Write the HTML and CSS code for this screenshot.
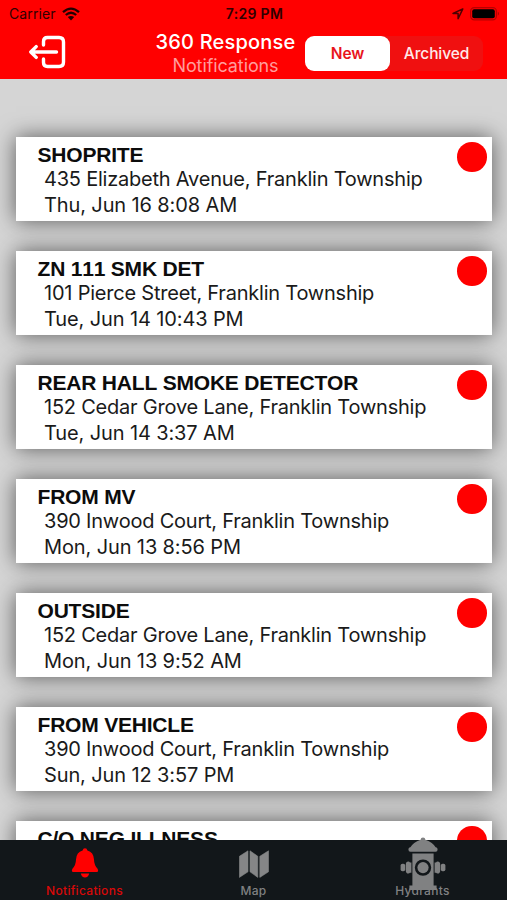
FILE: index.html
```html
<!DOCTYPE html>
<html lang="en">
<head>
  <meta charset="UTF-8" />
  <meta name="viewport" content="width=device-width, initial-scale=1.0"/>
  <title>360 Response</title>
  <link rel="stylesheet" href="styles.css">
</head>
<body>
  <div class="app">
    <header class="header">
      <div class="status-bar">
        <div class="status-left">
          <span class="carrier">Carrier</span>
          <svg class="wifi" width="18" height="14" viewBox="0 0 18 14">
            <path d="M1 5.2 Q9 -2 17 5.2 M3.8 8 Q9 3.4 14.2 8" fill="none" stroke="#220000" stroke-width="2.3"/>
            <path d="M9 13.4 L5.8 10.1 Q9 7.7 12.2 10.1 Z" fill="#220000"/>
          </svg>
        </div>
        <span class="time">7:29 PM</span>
        <div class="status-right">
          <svg width="12" height="12" viewBox="0 0 12 12">
            <path d="M10.8 0.9 L1 5.5 H6.1 V10.8 Z" fill="none" stroke="#4c0000" stroke-width="1.5" stroke-linejoin="round"/>
          </svg>
          <svg width="30" height="14" viewBox="0 0 30 14">
            <rect x="0.6" y="0.6" width="25.8" height="12.2" rx="3.6" fill="none" stroke="#b80000" stroke-width="1.2"/>
            <rect x="2.2" y="2.2" width="22.6" height="9" rx="2" fill="#000"/>
            <path d="M27.8 4.6 Q30 6.7 27.8 8.8 Z" fill="#a80000"/>
          </svg>
        </div>
      </div>
      <div class="nav">
        <svg class="logout" width="38" height="36" viewBox="0 0 38 36">
          <path d="M14.5 10 V6.5 Q14.5 2.5 18.5 2.5 H30 Q34.5 2.5 34.5 7 V27 Q34.5 31.5 30 31.5 H18.5 Q14.5 31.5 14.5 27.5 V24" fill="none" stroke="#fff" stroke-width="3.4" stroke-linecap="round"/>
          <path d="M27.5 17 H2 M7.2 11.6 L1.8 17 L7.2 22.4" fill="none" stroke="#fff" stroke-width="3.4" stroke-linecap="round" stroke-linejoin="round"/>
        </svg>
        <div class="titles">
          <div class="title">360 Response</div>
          <div class="subtitle">Notifications</div>
        </div>
        <div class="segmented">
          <div class="segment active">New</div>
          <div class="segment">Archived</div>
        </div>
      </div>
    </header>

    <main class="list">
      <div class="card">
        <div class="card-text">
          <h2>SHOPRITE</h2>
          <p class="address">435 Elizabeth Avenue, Franklin Township</p>
          <p class="date">Thu, Jun 16 8:08 AM</p>
        </div>
        <span class="dot"></span>
      </div>
      <div class="card">
        <div class="card-text">
          <h2>ZN 111 SMK DET</h2>
          <p class="address">101 Pierce Street, Franklin Township</p>
          <p class="date">Tue, Jun 14 10:43 PM</p>
        </div>
        <span class="dot"></span>
      </div>
      <div class="card">
        <div class="card-text">
          <h2>REAR HALL SMOKE DETECTOR</h2>
          <p class="address">152 Cedar Grove Lane, Franklin Township</p>
          <p class="date">Tue, Jun 14 3:37 AM</p>
        </div>
        <span class="dot"></span>
      </div>
      <div class="card">
        <div class="card-text">
          <h2>FROM MV</h2>
          <p class="address">390 Inwood Court, Franklin Township</p>
          <p class="date">Mon, Jun 13 8:56 PM</p>
        </div>
        <span class="dot"></span>
      </div>
      <div class="card">
        <div class="card-text">
          <h2>OUTSIDE</h2>
          <p class="address">152 Cedar Grove Lane, Franklin Township</p>
          <p class="date">Mon, Jun 13 9:52 AM</p>
        </div>
        <span class="dot"></span>
      </div>
      <div class="card">
        <div class="card-text">
          <h2>FROM VEHICLE</h2>
          <p class="address">390 Inwood Court, Franklin Township</p>
          <p class="date">Sun, Jun 12 3:57 PM</p>
        </div>
        <span class="dot"></span>
      </div>
      <div class="card">
        <div class="card-text">
          <h2>C/O NEG ILLNESS</h2>
        </div>
        <span class="dot"></span>
      </div>
    </main>

    <nav class="tab-bar">
      <div class="tab active">
        <svg width="28" height="30" viewBox="0 0 28 30">
          <path d="M14 0.3 Q16 0.3 16.4 2.4 Q22.6 4 23 11.5 Q23.1 17 26.4 20.5 Q28.2 24 25.6 24 H2.4 Q-0.2 24 1.6 20.5 Q4.9 17 5 11.5 Q5.4 4 11.6 2.4 Q12 0.3 14 0.3 Z M9.8 25.6 H18.2 Q17.2 29.6 14 29.6 Q10.8 29.6 9.8 25.6 Z" fill="#f00"/>
        </svg>
        <span>Notifications</span>
      </div>
      <div class="tab">
        <svg width="30" height="28" viewBox="0 0 30 28">
          <path d="M0.4 6.3 L9 0.8 V21.8 L0.4 27.4 Z M11 0.8 L18.8 6.3 V27.4 L11 21.8 Z M20.8 6.3 L29.5 0.8 V21.8 L20.8 27.4 Z" fill="#858687" stroke="#858687" stroke-width="0.6" stroke-linejoin="round"/>
        </svg>
        <span>Map</span>
      </div>
      <div class="tab">
        <svg class="hydrant" width="46" height="54" viewBox="0 0 46 54">
          <g fill="#808182">
            <path d="M23 0.5 Q25.2 0.5 25.4 2.7 Q33 5.5 35.6 10.3 H36 Q37.6 10.6 37.6 12.5 Q37.6 14.8 35.6 14.8 H10.4 Q8.4 14.8 8.4 12.5 Q8.4 10.6 10 10.3 H10.4 Q13 5.5 20.6 2.7 Q20.8 0.5 23 0.5 Z"/>
            <path fill-rule="evenodd" d="M12.4 16.4 H33.6 V48.6 H36.6 V53 H9.4 V48.6 H12.4 Z M23 22.4 A8.2 8.2 0 1 0 23 38.8 A8.2 8.2 0 1 0 23 22.4 Z"/>
            <circle cx="23" cy="30.6" r="5.6"/>
            <path d="M11.4 25.4 V35.8 H10 Q9.4 36.6 8.4 36.6 Q5.8 36.6 5.8 33.5 V27.6 Q5.8 24.6 8.4 24.6 Q9.4 24.6 10 25.4 Z"/>
            <rect x="0.6" y="26.8" width="4.6" height="7.4" rx="1.8"/>
            <path d="M34.6 25.4 V35.8 H36 Q36.6 36.6 37.6 36.6 Q40.2 36.6 40.2 33.5 V27.6 Q40.2 24.6 37.6 24.6 Q36.6 24.6 36 25.4 Z"/>
            <rect x="40.8" y="26.8" width="4.6" height="7.4" rx="1.8"/>
          </g>
        </svg>
        <span>Hydrants</span>
      </div>
    </nav>
  </div>
</body>
</html>
```
FILE: styles.css
```css
* {
  box-sizing: border-box;
}

body {
  margin: 0;
  font-family: Inter, "Liberation Sans", sans-serif;
  background-color: #d5d5d5;
}

.app {
  height: 900px;
  overflow: hidden;
  display: flex;
  flex-direction: column;
}

/* header */
.header {
  flex: none;
  height: 79px;
  background: #ff0000;
}

.status-bar {
  height: 27px;
  padding: 0 7px 0 9px;
  display: grid;
  grid-template-columns: 1fr auto 1fr;
  align-items: center;
  font-size: 14px;
  color: #300000;
}

.status-left, .status-right {
  display: flex;
  align-items: center;
}

.status-left {
  gap: 6px;
}

.status-right {
  justify-content: flex-end;
  gap: 6px;
}

.carrier {
  letter-spacing: 0.1px;
}

.time {
  font-weight: 600;
  letter-spacing: 0.3px;
}

.nav {
  height: 52px;
  padding: 0 24px 0 29px;
  display: flex;
  align-items: center;
}

.titles {
  margin-left: 86px;
  width: 145px;
  text-align: center;
}

.title {
  font-size: 20px;
  line-height: 24px;
  font-weight: 500;
  letter-spacing: 0.2px;
  color: #fff;
  white-space: nowrap;
}

.subtitle {
  font-size: 18px;
  line-height: 23px;
  letter-spacing: -0.1px;
  color: #ff9c9c;
}

.segmented {
  margin-left: auto;
  width: 178px;
  height: 35px;
  border-radius: 9px;
  background: #f01010;
  display: flex;
}

.segment {
  flex: 1;
  display: flex;
  align-items: center;
  justify-content: center;
  font-size: 15.5px;
  font-weight: 500;
  letter-spacing: -0.1px;
  color: #ffe9e9;
}

.segment.active {
  flex: 0 0 85px;
  background: #fff;
  border-radius: 9px;
  color: #e8141c;
  font-weight: 600;
}

/* notification cards */
.list {
  flex: 1;
  min-height: 0;
  overflow: hidden;
  padding: 57.5px 15px 0 15.5px;
  display: flex;
  flex-direction: column;
  gap: 29.5px;
}

.card {
  flex: none;
  height: 84.5px;
  background: #fff;
  padding: 5.5px 5.5px 0 22px;
  display: flex;
  justify-content: space-between;
  box-shadow: 0 0 21px rgba(0, 0, 0, 0.58);
}

.card h2 {
  margin: 0;
  font-family: "Liberation Sans", Arial, sans-serif;
  font-size: 21px;
  line-height: 25px;
  font-weight: bold;
  font-kerning: none;
  letter-spacing: -0.2px;
  color: #0c0c0c;
}

.card p {
  margin: 0;
  padding-left: 6.5px;
  font-size: 20px;
  line-height: 25px;
  color: #1a1a1a;
  white-space: nowrap;
}

.card .address {
  letter-spacing: -0.22px;
}

.card .date {
  line-height: 26px;
  letter-spacing: -0.12px;
}

.dot {
  width: 29.5px;
  height: 29.5px;
  border-radius: 50%;
  background: #ff0000;
}

/* bottom tabs */
.tab-bar {
  flex: none;
  position: relative;
  height: 60px;
  background: #12171a;
  display: flex;
}

.tab {
  flex: 1;
  padding-bottom: 2px;
  display: flex;
  flex-direction: column;
  align-items: center;
  justify-content: flex-end;
  font-size: 12px;
  line-height: 15px;
  font-weight: 500;
  letter-spacing: 0.3px;
  color: #808182;
}

.tab svg {
  flex: none;
  margin-bottom: 5px;
}

.tab.active {
  color: #d90808;
}

/* the hydrant is taller than the bar and runs down behind its label */
.tab .hydrant {
  margin-bottom: -8px;
}
```
